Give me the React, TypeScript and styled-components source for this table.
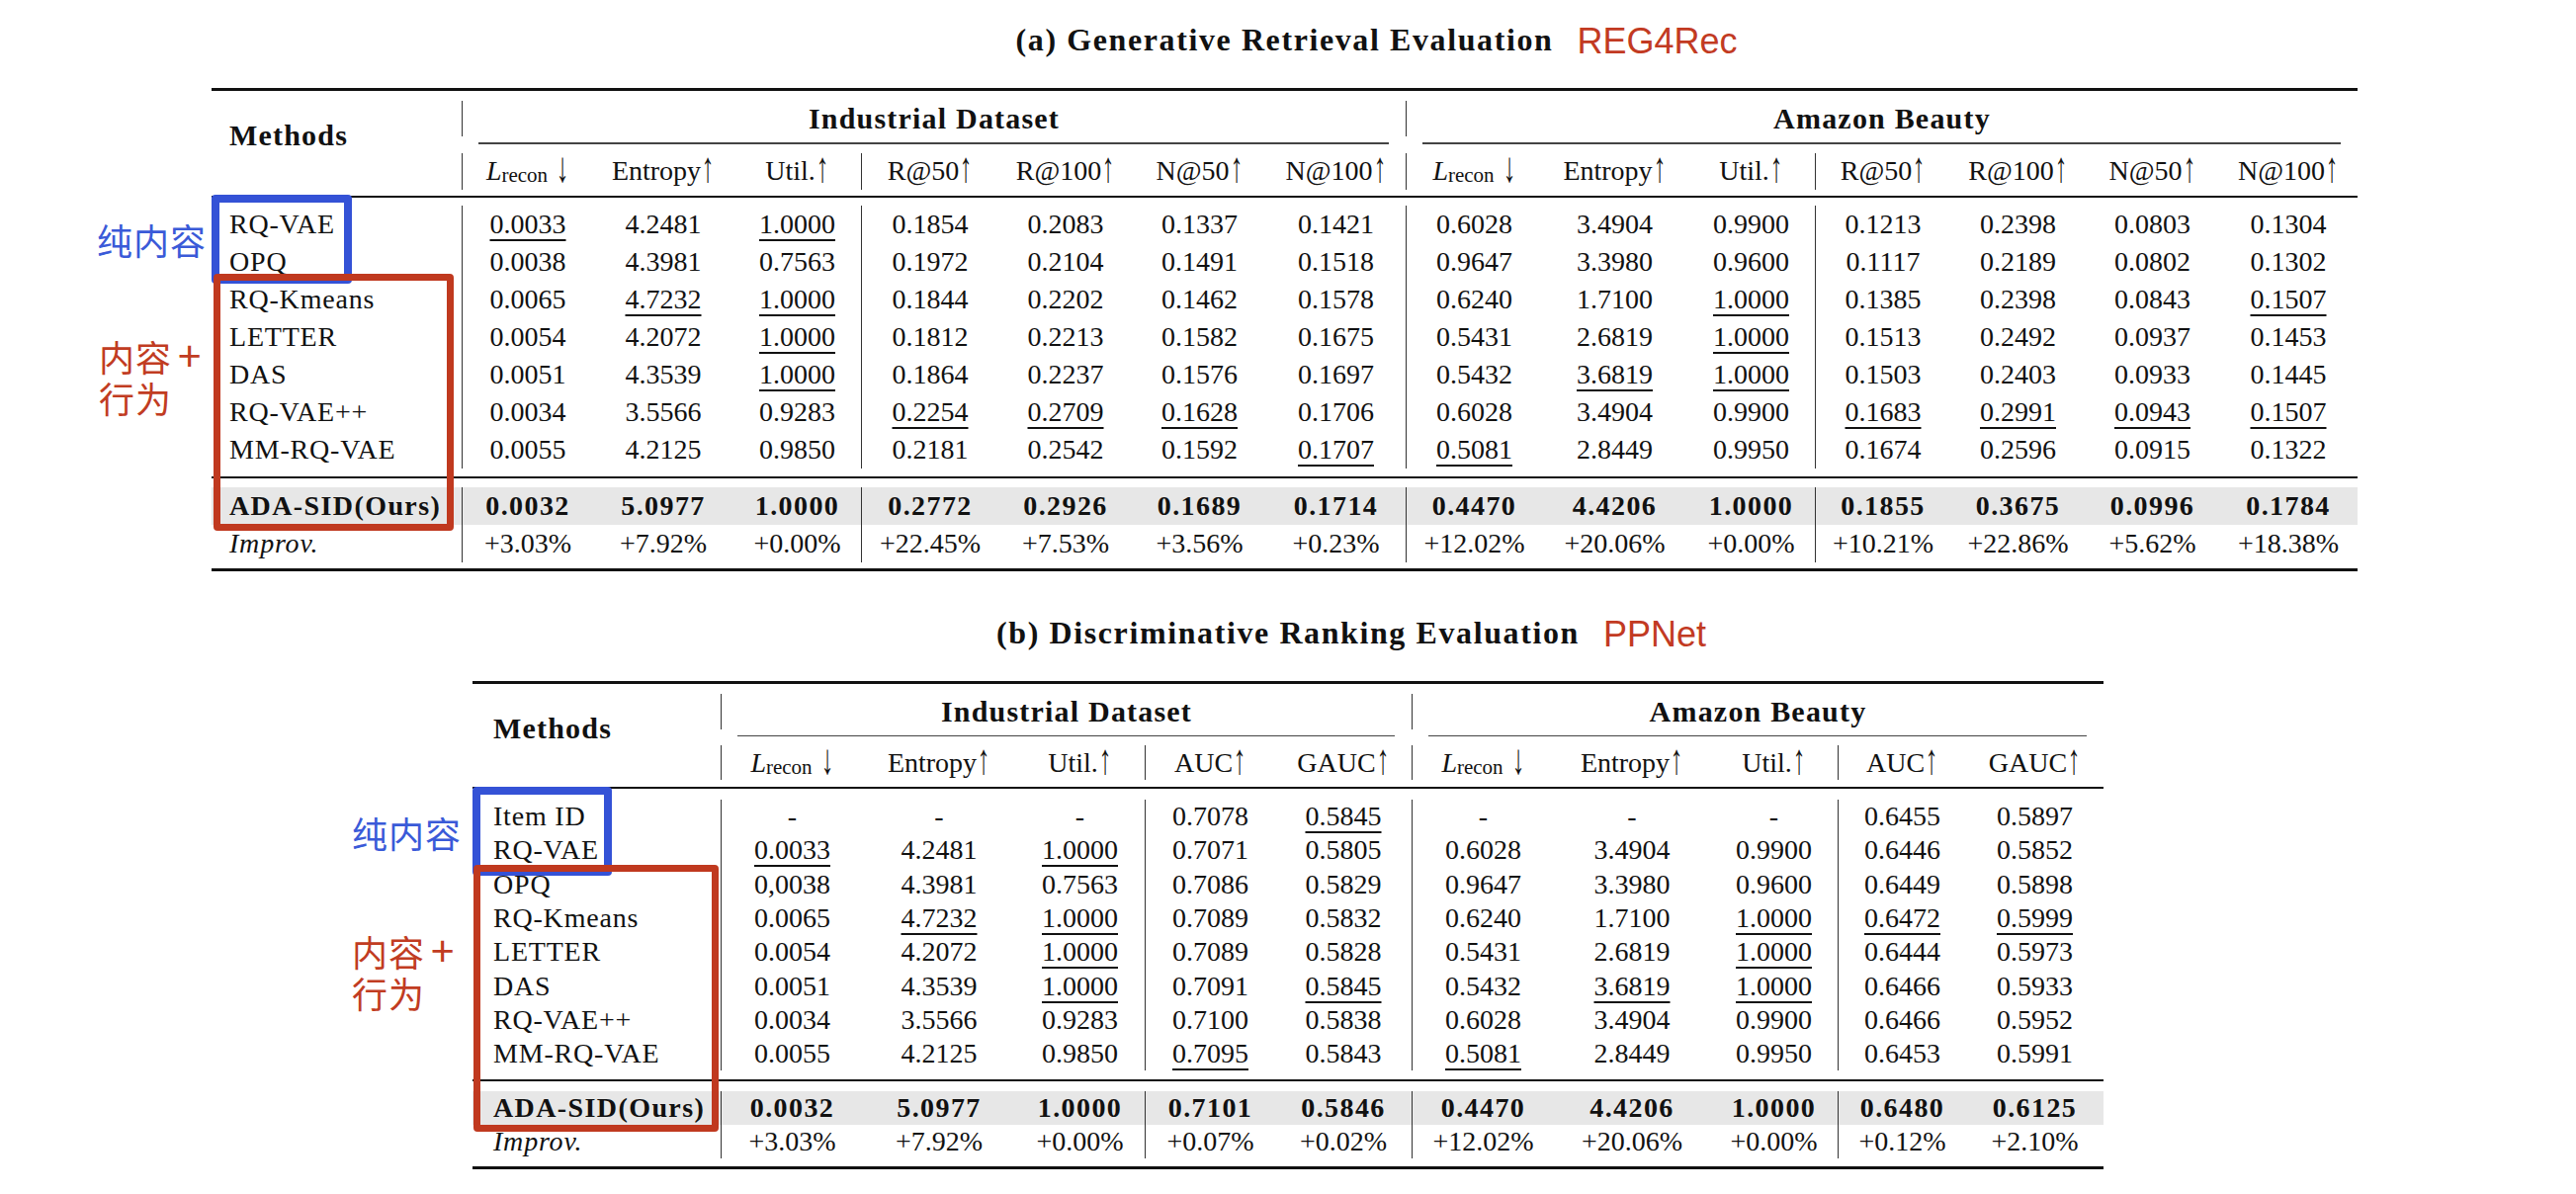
import React from 'react';
import styled, { createGlobalStyle } from 'styled-components';

const GlobalStyle = createGlobalStyle`
  html, body { margin: 0; padding: 0; background: #fff; }
  body { font-family: "Liberation Serif", "Times New Roman", serif; color: #111; }
`;

type Row = { name: string; vals: string[] };

type Layout = {
  rowH: number;
  tailH: number;
  groupH: number;
  metricH: number;
  gapTop: number;
  cmidAbove: number;
  cmidBelow: number;
  midAbove: number;
  midBelow: number;
  ruleAbove: number;
  ruleBelow: number;
  botAbove: number;
  padLeft: number;
};

type Mark = { x: number; y: number; w: number; h: number; b: number };
type Note = { x: number; y: number };

const Page = styled.div`
  width: 2606px;
  height: 1208px;
  box-sizing: border-box;
  padding-top: 20px;
  display: flex;
  flex-direction: column;
  align-items: center;
  gap: 42px;
  overflow: hidden;
`;

const Figure = styled.section<{ $width: number; $shift?: number }>`
  width: ${p => p.$width}px;
  margin-right: ${p => p.$shift || 0}px;
`;

const Caption = styled.div`
  height: 40px;
  line-height: 40px;
  margin-bottom: 29px;
  text-align: center;
  white-space: nowrap;
`;

const CaptionText = styled.span`
  position: relative;
  font-size: 32px;
  font-weight: 700;
  letter-spacing: 1.6px;
`;

const Tag = styled.span`
  position: absolute;
  left: calc(100% + 24px);
  top: 0;
  font-family: "Liberation Sans", Arial, sans-serif;
  font-weight: 400;
  font-size: 36px;
  letter-spacing: 0;
  color: #c23a22;
`;

const TableWrap = styled.div`
  position: relative;
`;

const Grid = styled.table`
  width: 100%;
  table-layout: fixed;
  border-collapse: separate;
  border-spacing: 0;
  font-size: 28px;
`;

const RuleCell = styled.td`
  padding: 0;
`;

const Rule = styled.div<{ $h: number; $above: number; $below: number; $trim?: number; $color?: string }>`
  height: ${p => p.$h}px;
  margin: ${p => p.$above}px ${p => p.$trim || 0}px ${p => p.$below}px;
  background: ${p => p.$color || '#111'};
`;

const Cell = styled.td<{ $h: number; $vl?: boolean; $bold?: boolean; $shade?: boolean }>`
  height: ${p => p.$h}px;
  padding: 0;
  text-align: center;
  vertical-align: middle;
  line-height: 1;
  white-space: nowrap;
  border-left: ${p => (p.$vl ? '1.5px solid #333' : 'none')};
  font-weight: ${p => (p.$bold ? 700 : 400)};
  letter-spacing: ${p => (p.$bold ? '1.4px' : '0')};
  background: ${p => (p.$shade ? '#e7e7e7' : 'transparent')};
`;

const GroupCell = styled.td<{ $h: number }>`
  height: ${p => p.$h}px;
  padding: 0;
  text-align: center;
  vertical-align: middle;
  line-height: 1;
  border-left: 1.5px solid #333;
  font-size: 30px;
  font-weight: 700;
  letter-spacing: 1.2px;
`;

const MethodHead = styled.td<{ $pad: number }>`
  padding: 20px 0 0 ${p => p.$pad}px;
  vertical-align: top;
  text-align: left;
  line-height: 1;
  font-size: 30px;
  font-weight: 700;
  letter-spacing: 1.2px;
`;

const NameCell = styled.td<{ $h: number; $pad: number; $bold?: boolean; $shade?: boolean; $italic?: boolean }>`
  height: ${p => p.$h}px;
  padding: 0 0 0 ${p => p.$pad}px;
  text-align: left;
  vertical-align: middle;
  line-height: 1;
  white-space: nowrap;
  font-weight: ${p => (p.$bold ? 700 : 400)};
  font-style: ${p => (p.$italic ? 'italic' : 'normal')};
  letter-spacing: ${p => (p.$bold ? '1.4px' : '0.8px')};
  background: ${p => (p.$shade ? '#e7e7e7' : 'transparent')};
`;

const U = styled.span`
  text-decoration: underline;
  text-decoration-thickness: 2px;
  text-underline-offset: 6px;
`;

const Ital = styled.span`
  font-style: italic;
`;

const Sub = styled.span`
  font-size: 21px;
  position: relative;
  top: 2px;
`;

const Arrow = styled.span<{ $gap?: number }>`
  display: inline-block;
  margin-left: ${p => p.$gap || 0}px;
  transform: scale(0.9, 1.55);
  transform-origin: 50% 72%;
`;

const Bracket = styled.div<{ $color: string; $x: number; $y: number; $w: number; $h: number; $b: number }>`
  position: absolute;
  left: ${p => p.$x}px;
  top: ${p => p.$y}px;
  width: ${p => p.$w}px;
  height: ${p => p.$h}px;
  box-sizing: border-box;
  border: ${p => p.$b}px solid ${p => p.$color};
  border-radius: 4px;
  pointer-events: none;
`;

const Label = styled.div<{ $color: string; $x: number; $y: number }>`
  position: absolute;
  left: ${p => p.$x}px;
  top: ${p => p.$y}px;
  font-family: "Noto Sans CJK SC", "Noto Sans", sans-serif;
  font-size: 36px;
  line-height: 42px;
  letter-spacing: 1px;
  color: ${p => p.$color};
  white-space: nowrap;
`;

const Plus = styled.span`
  margin-left: 6px;
  font-size: 42px;
  line-height: 36px;
`;

const Lrecon = () => (
  <>
    <Ital>L</Ital>
    <Sub>recon</Sub>
    <Arrow $gap={8}>↓</Arrow>
  </>
);

const up = (label: string) => (
  <>
    {label}
    <Arrow>↑</Arrow>
  </>
);

const show = (v: string) => (v.startsWith('_') ? <U>{v.slice(1)}</U> : v);

type TableProps = {
  cols: number[];
  metrics: React.ReactNode[];
  split: number;
  rows: Row[];
  ours: Row;
  improv: string[];
  layout: Layout;
  blue: Mark;
  red: Mark;
  pure: Note;
  mixed: Note;
};

const ResultTable = ({ cols, metrics, split, rows, ours, improv, layout: l, blue, red, pure, mixed }: TableProps) => {
  const total = cols.length;
  const per = metrics.length;
  const vl = (i: number) => i % per === 0 || i % per === split;
  return (
    <TableWrap>
      <Grid>
        <colgroup>
          {cols.map((w, i) => (
            <col key={i} style={{ width: w }} />
          ))}
        </colgroup>
        <tbody>
          <tr>
            <RuleCell colSpan={total}>
              <Rule $h={3} $above={0} $below={l.gapTop} />
            </RuleCell>
          </tr>
          <tr>
            <MethodHead rowSpan={3} $pad={l.padLeft}>Methods</MethodHead>
            <GroupCell colSpan={per} $h={l.groupH}>Industrial Dataset</GroupCell>
            <GroupCell colSpan={per} $h={l.groupH}>Amazon Beauty</GroupCell>
          </tr>
          <tr>
            <RuleCell colSpan={per}>
              <Rule $h={1.5} $above={l.cmidAbove} $below={l.cmidBelow} $trim={17} $color="#444" />
            </RuleCell>
            <RuleCell colSpan={per}>
              <Rule $h={1.5} $above={l.cmidAbove} $below={l.cmidBelow} $trim={17} $color="#444" />
            </RuleCell>
          </tr>
          <tr>
            {[...metrics, ...metrics].map((m, i) => (
              <Cell key={i} $h={l.metricH} $vl={vl(i)}>
                {m}
              </Cell>
            ))}
          </tr>
          <tr>
            <RuleCell colSpan={total}>
              <Rule $h={2} $above={l.midAbove} $below={l.midBelow} />
            </RuleCell>
          </tr>
          {rows.map(r => (
            <tr key={r.name}>
              <NameCell $h={l.rowH} $pad={l.padLeft}>{r.name}</NameCell>
              {r.vals.map((v, i) => (
                <Cell key={i} $h={l.rowH} $vl={vl(i)}>
                  {show(v)}
                </Cell>
              ))}
            </tr>
          ))}
          <tr>
            <RuleCell colSpan={total}>
              <Rule $h={2} $above={l.ruleAbove} $below={l.ruleBelow} />
            </RuleCell>
          </tr>
          <tr>
            <NameCell $h={l.tailH} $pad={l.padLeft} $bold $shade>
              {ours.name}
            </NameCell>
            {ours.vals.map((v, i) => (
              <Cell key={i} $h={l.tailH} $vl={vl(i)} $bold $shade>
                {v}
              </Cell>
            ))}
          </tr>
          <tr>
            <NameCell $h={l.tailH} $pad={l.padLeft} $italic>
              Improv.
            </NameCell>
            {improv.map((v, i) => (
              <Cell key={i} $h={l.tailH} $vl={vl(i)}>
                {v}
              </Cell>
            ))}
          </tr>
          <tr>
            <RuleCell colSpan={total}>
              <Rule $h={3} $above={l.botAbove} $below={0} />
            </RuleCell>
          </tr>
        </tbody>
      </Grid>
      <Bracket $color="#3452d6" $x={blue.x} $y={blue.y} $w={blue.w} $h={blue.h} $b={blue.b} />
      <Bracket $color="#c0391f" $x={red.x} $y={red.y} $w={red.w} $h={red.h} $b={red.b} />
      <Label $color="#3a5ad8" $x={pure.x} $y={pure.y}>
        纯内容
      </Label>
      <Label $color="#c13c22" $x={mixed.x} $y={mixed.y}>
        <div>
          内容<Plus>+</Plus>
        </div>
        <div>行为</div>
      </Label>
    </TableWrap>
  );
};

const retrievalRows: Row[] = [
  { name: 'RQ-VAE', vals: ['_0.0033', '4.2481', '_1.0000', '0.1854', '0.2083', '0.1337', '0.1421', '0.6028', '3.4904', '0.9900', '0.1213', '0.2398', '0.0803', '0.1304'] },
  { name: 'OPQ', vals: ['0.0038', '4.3981', '0.7563', '0.1972', '0.2104', '0.1491', '0.1518', '0.9647', '3.3980', '0.9600', '0.1117', '0.2189', '0.0802', '0.1302'] },
  { name: 'RQ-Kmeans', vals: ['0.0065', '_4.7232', '_1.0000', '0.1844', '0.2202', '0.1462', '0.1578', '0.6240', '1.7100', '_1.0000', '0.1385', '0.2398', '0.0843', '_0.1507'] },
  { name: 'LETTER', vals: ['0.0054', '4.2072', '_1.0000', '0.1812', '0.2213', '0.1582', '0.1675', '0.5431', '2.6819', '_1.0000', '0.1513', '0.2492', '0.0937', '0.1453'] },
  { name: 'DAS', vals: ['0.0051', '4.3539', '_1.0000', '0.1864', '0.2237', '0.1576', '0.1697', '0.5432', '_3.6819', '_1.0000', '0.1503', '0.2403', '0.0933', '0.1445'] },
  { name: 'RQ-VAE++', vals: ['0.0034', '3.5566', '0.9283', '_0.2254', '_0.2709', '_0.1628', '0.1706', '0.6028', '3.4904', '0.9900', '_0.1683', '_0.2991', '_0.0943', '_0.1507'] },
  { name: 'MM-RQ-VAE', vals: ['0.0055', '4.2125', '0.9850', '0.2181', '0.2542', '0.1592', '_0.1707', '_0.5081', '2.8449', '0.9950', '0.1674', '0.2596', '0.0915', '0.1322'] },
];

const retrievalOurs: Row = {
  name: 'ADA-SID(Ours)',
  vals: ['0.0032', '5.0977', '1.0000', '0.2772', '0.2926', '0.1689', '0.1714', '0.4470', '4.4206', '1.0000', '0.1855', '0.3675', '0.0996', '0.1784'],
};

const retrievalImprov = ['+3.03%', '+7.92%', '+0.00%', '+22.45%', '+7.53%', '+3.56%', '+0.23%', '+12.02%', '+20.06%', '+0.00%', '+10.21%', '+22.86%', '+5.62%', '+18.38%'];

const rankingRows: Row[] = [
  { name: 'Item ID', vals: ['-', '-', '-', '0.7078', '_0.5845', '-', '-', '-', '0.6455', '0.5897'] },
  { name: 'RQ-VAE', vals: ['_0.0033', '4.2481', '_1.0000', '0.7071', '0.5805', '0.6028', '3.4904', '0.9900', '0.6446', '0.5852'] },
  { name: 'OPQ', vals: ['0,0038', '4.3981', '0.7563', '0.7086', '0.5829', '0.9647', '3.3980', '0.9600', '0.6449', '0.5898'] },
  { name: 'RQ-Kmeans', vals: ['0.0065', '_4.7232', '_1.0000', '0.7089', '0.5832', '0.6240', '1.7100', '_1.0000', '_0.6472', '_0.5999'] },
  { name: 'LETTER', vals: ['0.0054', '4.2072', '_1.0000', '0.7089', '0.5828', '0.5431', '2.6819', '_1.0000', '0.6444', '0.5973'] },
  { name: 'DAS', vals: ['0.0051', '4.3539', '_1.0000', '0.7091', '_0.5845', '0.5432', '_3.6819', '_1.0000', '0.6466', '0.5933'] },
  { name: 'RQ-VAE++', vals: ['0.0034', '3.5566', '0.9283', '0.7100', '0.5838', '0.6028', '3.4904', '0.9900', '0.6466', '0.5952'] },
  { name: 'MM-RQ-VAE', vals: ['0.0055', '4.2125', '0.9850', '_0.7095', '0.5843', '_0.5081', '2.8449', '0.9950', '0.6453', '0.5991'] },
];

const rankingOurs: Row = {
  name: 'ADA-SID(Ours)',
  vals: ['0.0032', '5.0977', '1.0000', '0.7101', '0.5846', '0.4470', '4.4206', '1.0000', '0.6480', '0.6125'],
};

const rankingImprov = ['+3.03%', '+7.92%', '+0.00%', '+0.07%', '+0.02%', '+12.02%', '+20.06%', '+0.00%', '+0.12%', '+2.10%'];

const retrievalLayout: Layout = {
  rowH: 38, tailH: 38, groupH: 36, metricH: 37, gapTop: 10, cmidAbove: 6, cmidBelow: 9,
  midAbove: 6, midBelow: 8, ruleAbove: 8, ruleBelow: 9, botAbove: 6, padLeft: 18,
};

const rankingLayout: Layout = {
  rowH: 34.3, tailH: 34, groupH: 36, metricH: 35, gapTop: 10, cmidAbove: 6, cmidBelow: 9,
  midAbove: 7, midBelow: 11, ruleAbove: 9, ruleBelow: 10, botAbove: 8, padLeft: 21,
};

const App = () => (
  <>
    <GlobalStyle />
    <Page>
      <Figure $width={2171} $shift={7}>
        <Caption>
          <CaptionText>
            (a) Generative Retrieval Evaluation
            <Tag>REG4Rec</Tag>
          </CaptionText>
        </Caption>
        <ResultTable
          cols={[253, 133, 142, 129, 139, 136, 135, 141, 138, 147, 129, 137, 137, 135, 140]}
          metrics={[<Lrecon key="l" />, up('Entropy'), up('Util.'), up('R@50'), up('R@100'), up('N@50'), up('N@100')]}
          split={3}
          rows={retrievalRows}
          ours={retrievalOurs}
          improv={retrievalImprov}
          layout={retrievalLayout}
          blue={{ x: 0, y: 108, w: 142, h: 90, b: 8 }}
          red={{ x: 2, y: 188, w: 243, h: 260, b: 7 }}
          pure={{ x: -116, y: 132 }}
          mixed={{ x: -114, y: 250 }}
        />
      </Figure>
      <Figure $width={1650}>
        <Caption>
          <CaptionText>
            (b) Discriminative Ranking Evaluation
            <Tag>PPNet</Tag>
          </CaptionText>
        </Caption>
        <ResultTable
          cols={[251, 144, 154, 131, 132, 138, 144, 158, 129, 130, 139]}
          metrics={[<Lrecon key="l" />, up('Entropy'), up('Util.'), up('AUC'), up('GAUC')]}
          split={3}
          rows={rankingRows}
          ours={rankingOurs}
          improv={rankingImprov}
          layout={rankingLayout}
          blue={{ x: 0, y: 107, w: 141, h: 90, b: 8 }}
          red={{ x: 1, y: 186, w: 248, h: 270, b: 7 }}
          pure={{ x: -122, y: 132 }}
          mixed={{ x: -122, y: 252 }}
        />
      </Figure>
    </Page>
  </>
);

export default App;
